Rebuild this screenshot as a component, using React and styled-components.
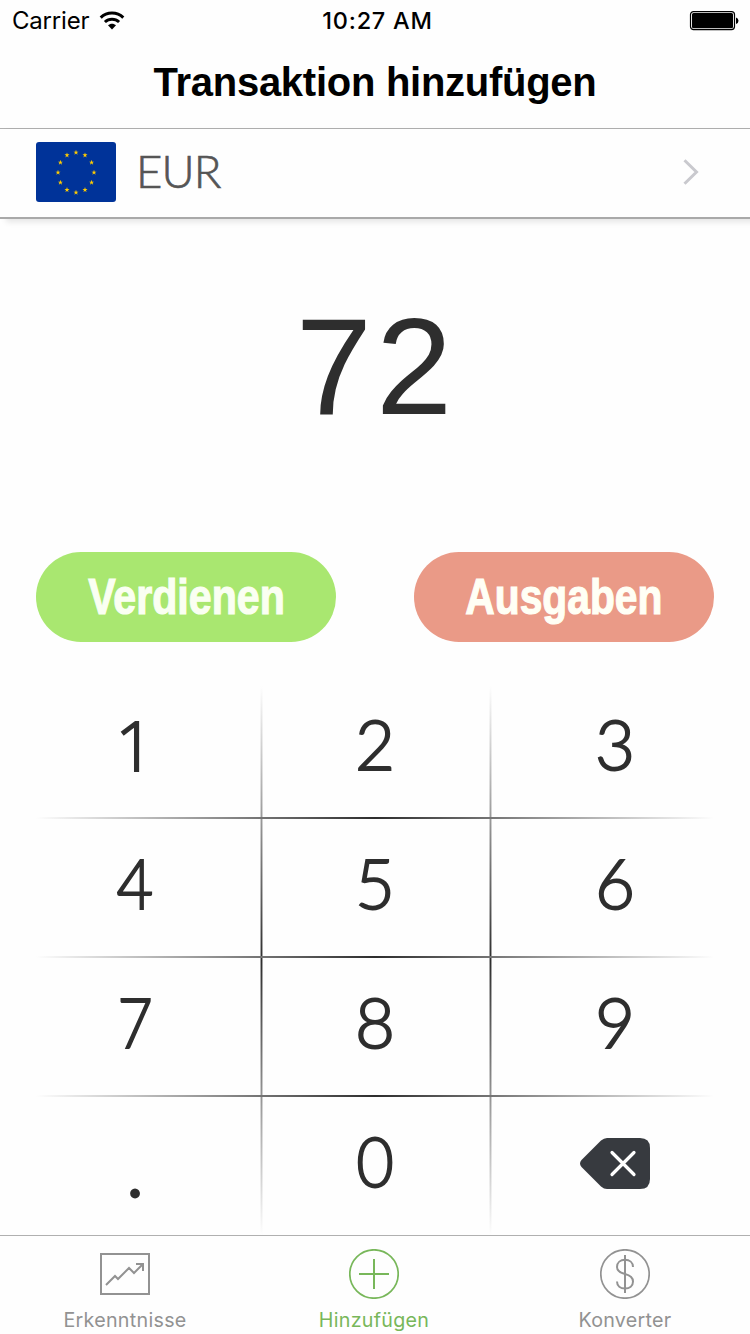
import React from "react";
import styled, { createGlobalStyle } from "styled-components";

const GlobalStyle = createGlobalStyle`
  * { box-sizing: border-box; }
  body { margin: 0; background: #fefefe; }
  button { border: 0; padding: 0; background: none; font: inherit; color: inherit; }
`;

const Screen = styled.div`
  width: 750px;
  height: 1334px;
  display: flex;
  flex-direction: column;
  overflow: hidden;
  background: #fefefe;
  font-family: Inter, "Liberation Sans", sans-serif;
`;

const StatusBar = styled.div`
  height: 40px;
  display: grid;
  grid-template-columns: 1fr auto 1fr;
  align-items: center;
  padding: 1px 11px 0 12px;
  font-size: 24px;
  line-height: 40px;
  color: #000;
`;

const Carrier = styled.div`
  display: flex;
  align-items: center;
  gap: 10px;
  letter-spacing: -0.2px;
`;

const Clock = styled.div`
  padding-left: 4px;
  font-size: 23.5px;
  font-weight: 550;
  letter-spacing: 0.75px;
`;

const Battery = styled.svg`
  justify-self: end;
  display: block;
`;

const TitleBar = styled.header`
  height: 89px;
  padding-bottom: 4px;
  border-bottom: 1px solid #b0b0b0;
  display: flex;
  align-items: center;
  justify-content: center;
`;

const Title = styled.h1`
  margin: 0;
  font: bold 40px/48px "Liberation Sans", sans-serif;
  letter-spacing: -0.27px;
  color: #000;
`;

const CurrencyRow = styled.div`
  height: 90px;
  flex: none;
  display: flex;
  align-items: center;
  padding: 0 51px 2px 36px;
  border-bottom: 2px solid #a9a9a9;
  box-shadow: 6px 3px 6px rgba(0, 0, 0, 0.1);
`;

const Flag = styled.svg`
  display: block;
  border-radius: 3px;
`;

const CurrencyCode = styled.span`
  flex: 1;
  margin-left: 20px;
  padding-bottom: 3px;
  font: 300 45.5px/60px Lato, sans-serif;
  letter-spacing: -0.9px;
  -webkit-text-stroke: 0.7px #555;
  color: #555;
`;

const Amount = styled.div`
  height: 333px;
  display: flex;
  justify-content: center;
  padding-top: 69px;
  font: 137px/157px "Liberation Sans", sans-serif;
  letter-spacing: 4px;
  text-indent: 2px;
  color: #2e2e2e;
`;

const Actions = styled.div`
  display: flex;
  justify-content: space-between;
  padding: 0 36px;
`;

const Pill = styled.button`
  width: 300px;
  height: 90px;
  border-radius: 45px;
  background: ${(p) => p.$bg};
  color: ${(p) => p.$fg};
  font: bold 50px/90px "Liberation Sans", sans-serif;
  display: flex;
  justify-content: center;
`;

const Condensed = styled.span`
  display: block;
  transform: scaleX(${(p) => p.$ratio});
  -webkit-text-stroke: 1.2px currentColor;
`;

const fade = "#fefefe, #2d2d2d 50%, #fefefe";
const softFade = "#fefefe, #a0a0a0 50%, #fefefe";

const Keypad = styled.div`
  height: 557px;
  margin-top: 36px;
  padding: 0 15px;
  display: grid;
  grid-template-columns: repeat(3, 240px);
  grid-template-rows: repeat(4, 139px);
  background:
    linear-gradient(90deg, ${fade}) 36px 139px / 678px 2px no-repeat,
    linear-gradient(90deg, ${fade}) 36px 278px / 678px 2px no-repeat,
    linear-gradient(90deg, ${fade}) 36px 417px / 678px 2px no-repeat,
    linear-gradient(${fade}) 261px 8px / 1px 549px no-repeat,
    linear-gradient(${fade}) 490px 8px / 1px 549px no-repeat,
    linear-gradient(${softFade}) 260px 8px / 3px 549px no-repeat,
    linear-gradient(${softFade}) 489px 8px / 3px 549px no-repeat;
`;

const Key = styled.button`
  display: flex;
  align-items: center;
  justify-content: center;
  padding-bottom: ${(p) => p.$lift ?? 7}px;
  font-family: ${(p) => (p.$plain ? '"Open Sans", sans-serif' : "Lato, sans-serif")};
  font-size: ${(p) => p.$size ?? 69}px;
  font-weight: 300;
  line-height: 100px;
  -webkit-text-stroke: 1.8px #2e2e2e;
  color: #2e2e2e;
`;

const Digit = styled.span`
  display: block;
  transform: scaleX(${(p) => p.$ratio});
`;

const TabBar = styled.nav`
  height: 99px;
  border-top: 1px solid #b0b0b0;
  display: grid;
  grid-template-columns: repeat(3, 250px);
`;

const Tab = styled.button`
  display: flex;
  flex-direction: column;
  align-items: center;
  padding-top: 13px;
  padding-right: ${(p) => (p.$active ? 2 : 0)}px;
  font-family: Inter, sans-serif;
  font-size: 19.7px;
  line-height: 24px;
  letter-spacing: 0.28px;
  color: ${(p) => (p.$active ? "#78b75a" : "#929292")};
  svg { display: block; margin-bottom: 9px; }
`;

function WifiIcon() {
  return (
    <svg width="26" height="20" viewBox="0 0 26 20" fill="none" stroke="#000" strokeWidth="3">
      <path d="M1.7 6.6C8 .6 18 .6 24.3 6.6" />
      <path d="M5.9 11C10 7.2 16 7.2 20.1 11" />
      <path d="M13 18.4l-4-4.1c2.2-2.1 5.8-2.1 8 0z" fill="#000" stroke="none" />
    </svg>
  );
}

const STARS = Array.from({ length: 12 }, (_, i) => {
  const a = (i * Math.PI) / 6;
  return [40 + 18 * Math.sin(a), 30.5 - 20 * Math.cos(a)];
});

const STAR_SHAPE = "0,-2.7 .65,-.85 2.5,-.85 1,.35 1.6,2.2 0,1.1 -1.6,2.2 -1,.35 -2.5,-.85 -.65,-.85";

function EuFlag() {
  return (
    <Flag width="80" height="60" viewBox="0 0 80 60">
      <rect width="80" height="60" fill="#039" />
      {STARS.map(([x, y], i) => (
        <polygon key={i} points={STAR_SHAPE} fill="#fc0" transform={`translate(${x} ${y})`} />
      ))}
    </Flag>
  );
}

function BackspaceIcon() {
  return (
    <svg width="70" height="51" viewBox="0 0 70 51">
      <path
        d="M27 0H60Q70 0 70 10V41Q70 51 60 51H27Q24 51 21 48.5L1.5 29Q-1.5 25.5 1.5 22L21 2.5Q24 0 27 0Z"
        fill="#373a3f"
      />
      <path d="M32 14.5L54 36.5M54 14.5L32 36.5" stroke="#fff" strokeWidth="3.2" strokeLinecap="round" />
    </svg>
  );
}

function ChartIcon() {
  return (
    <svg width="50" height="50" viewBox="0 0 50 50" fill="none" stroke="currentColor" strokeWidth="2">
      <rect x="1" y="5" width="48" height="40" />
      <path d="M6 36L15 27L18 30L29 19L34 24L43 15M36 15H43V22" />
    </svg>
  );
}

function PlusIcon() {
  return (
    <svg width="50" height="50" viewBox="0 0 50 50" fill="none" stroke="currentColor" strokeWidth="2">
      <circle cx="25" cy="25" r="24.2" strokeWidth="1.7" />
      <path d="M25 10V40M10 25H40" />
    </svg>
  );
}

function DollarIcon() {
  return (
    <svg width="50" height="50" viewBox="0 0 50 50" fill="none" stroke="currentColor" strokeWidth="2">
      <circle cx="25" cy="25" r="24.2" strokeWidth="1.7" />
      <path d="M25 6V44" />
      <path d="M33 18C33 13.5 29.5 10.8 25 10.8S17 13.5 17 18C17 22 20 23.7 25 25S33 28.5 33 32.5C33 37 29.5 39.5 25 39.5S17 37 17 32.5" />
    </svg>
  );
}

const KEYS = [
  { label: "1", plain: true },
  { label: "2" },
  { label: "3" },
  { label: "4", ratio: 0.92 },
  { label: "5" },
  { label: "6" },
  { label: "7", ratio: 0.88 },
  { label: "8" },
  { label: "9" },
  { label: ".", size: 86, lift: 2 },
  { label: "0", ratio: 0.94 },
];

export default function App() {
  return (
    <Screen>
      <GlobalStyle />
      <StatusBar>
        <Carrier>
          Carrier
          <WifiIcon />
        </Carrier>
        <Clock>10:27 AM</Clock>
        <Battery width="50" height="20" viewBox="0 0 50 20">
          <rect x="1.5" y=".6" width="44" height="18" rx="3" fill="none" stroke="#000" strokeWidth="1.2" />
          <rect x="3" y="2" width="41" height="15.2" rx="1.5" fill="#000" />
          <path d="M47 6.5q2.5.8 2.5 3.3t-2.5 3.3z" fill="#000" />
        </Battery>
      </StatusBar>
      <TitleBar>
        <Title>Transaktion hinzufügen</Title>
      </TitleBar>
      <CurrencyRow>
        <EuFlag />
        <CurrencyCode>EUR</CurrencyCode>
        <svg width="16" height="26" viewBox="0 0 16 26" fill="none" stroke="#c9c9ce" strokeWidth="3">
          <path d="M1.5 1.2L13.5 13L1.5 24.8" />
        </svg>
      </CurrencyRow>
      <Amount>72</Amount>
      <Actions>
        <Pill $bg="#a9e770" $fg="#fafff2">
          <Condensed $ratio={0.823}>Verdienen</Condensed>
        </Pill>
        <Pill $bg="#ea9a87" $fg="#fffff5">
          <Condensed $ratio={0.815}>Ausgaben</Condensed>
        </Pill>
      </Actions>
      <Keypad>
        {KEYS.map((k) => (
          <Key key={k.label} $plain={k.plain} $size={k.size} $lift={k.lift}>
            <Digit $ratio={k.ratio ?? 1}>{k.label}</Digit>
          </Key>
        ))}
        <Key aria-label="backspace" $lift={2}>
          <BackspaceIcon />
        </Key>
      </Keypad>
      <TabBar>
        <Tab>
          <ChartIcon />
          Erkenntnisse
        </Tab>
        <Tab $active>
          <PlusIcon />
          Hinzufügen
        </Tab>
        <Tab>
          <DollarIcon />
          Konverter
        </Tab>
      </TabBar>
    </Screen>
  );
}
